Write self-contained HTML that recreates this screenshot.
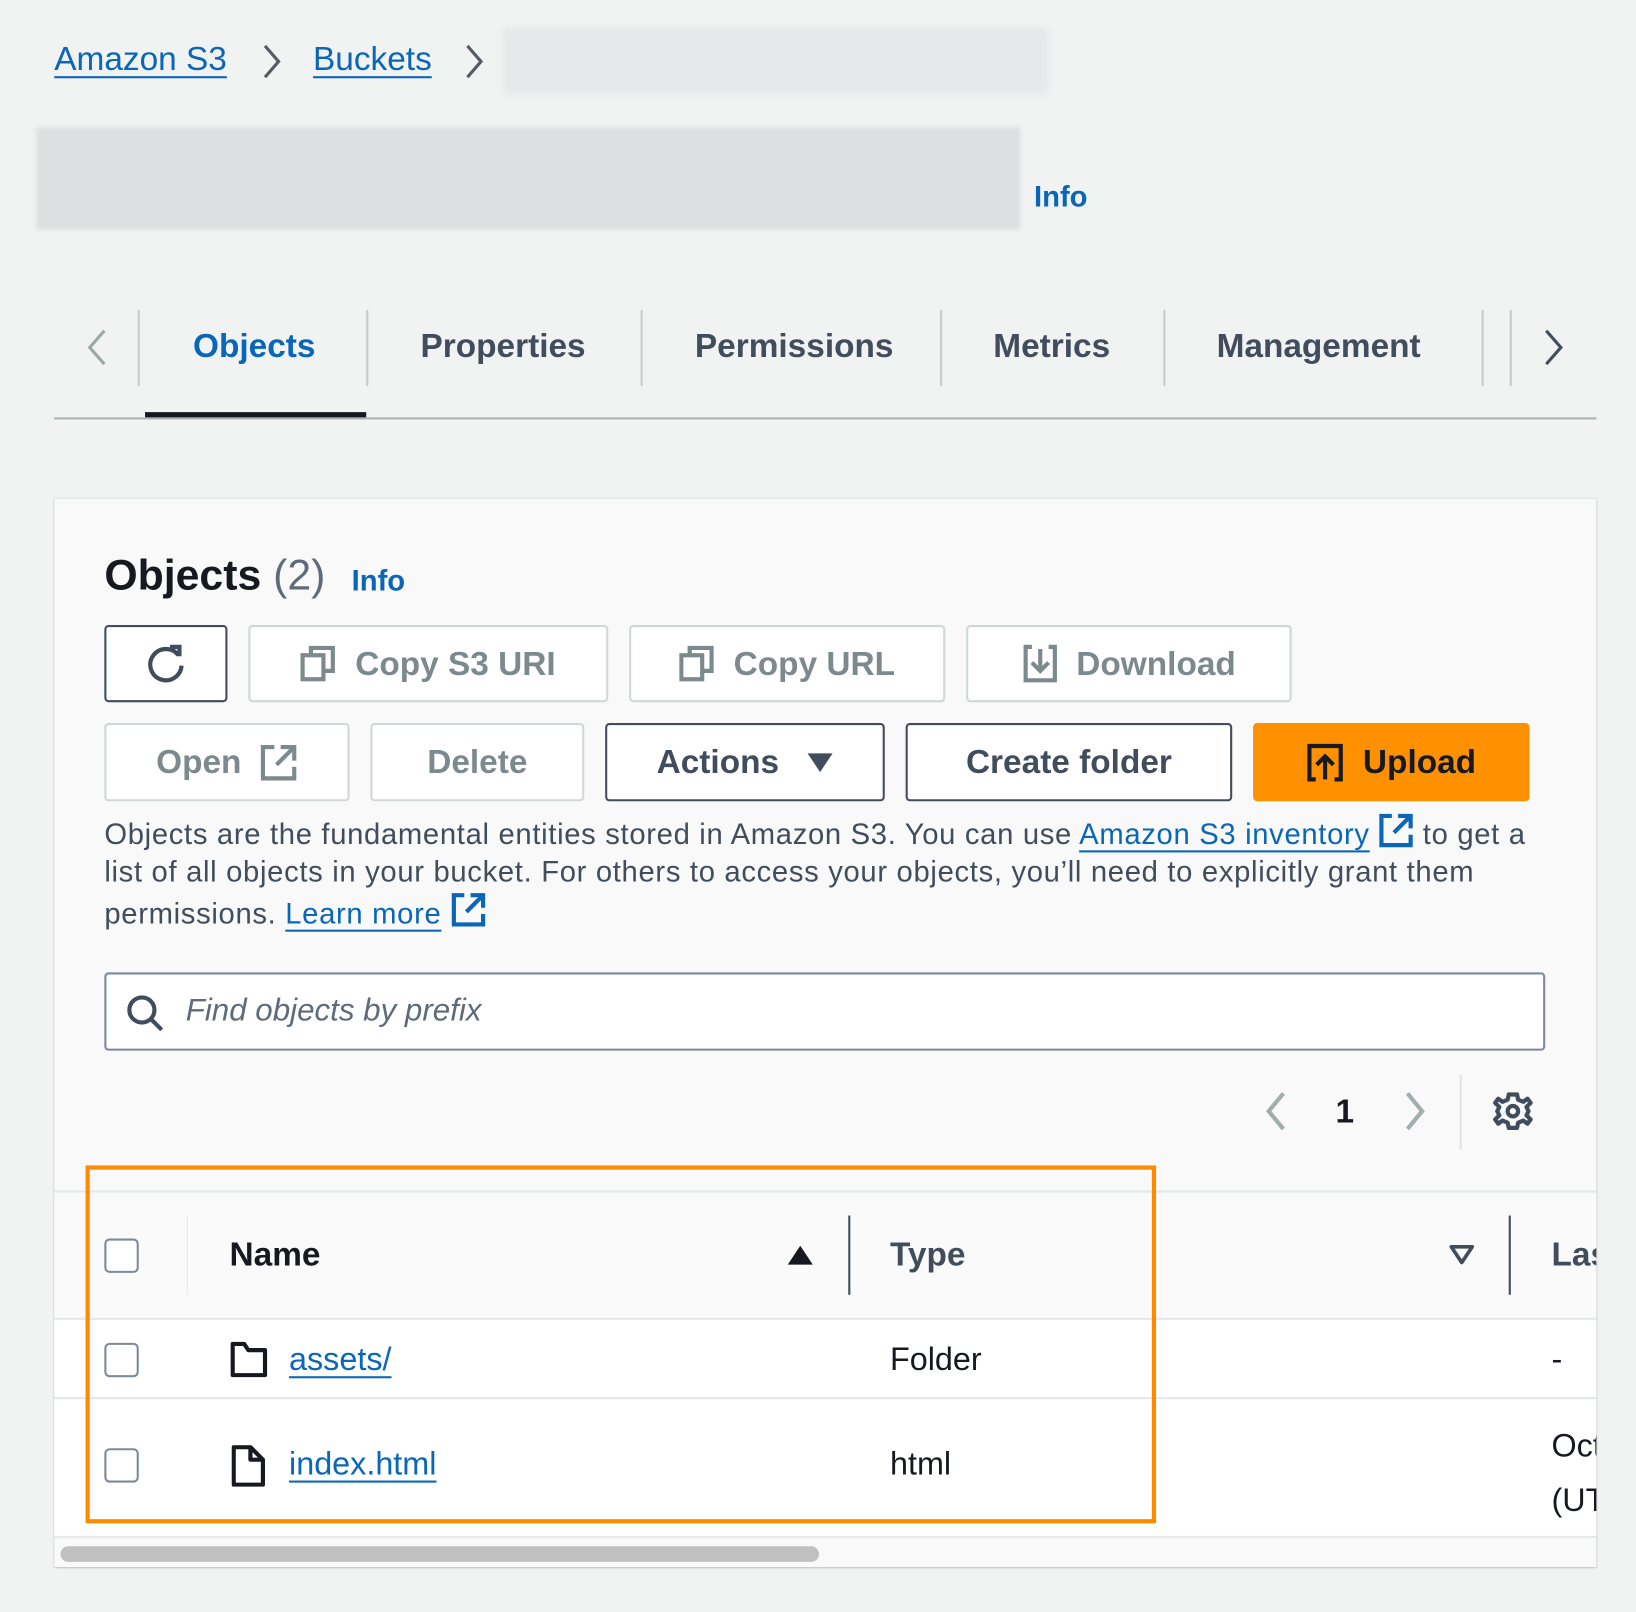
<!DOCTYPE html>
<html><head><meta charset="utf-8"><style>
*{margin:0;padding:0;box-sizing:border-box}
html,body{width:1636px;height:1612px;overflow:hidden;background:#f1f2f2;font-family:"Liberation Sans",sans-serif}
#w{position:absolute;left:0;top:0;width:1568px;height:1545px;transform:scale(1.04337);transform-origin:0 0}
.a{position:absolute;white-space:nowrap}
.lk{color:#0a66b8;text-decoration:underline;text-decoration-thickness:2px;text-underline-offset:6px}
.tab{font-size:32px;font-weight:bold;color:#414d5c;top:313px}
.sep{position:absolute;width:2px;background:#c6cccc;top:297px;height:73px}
.btn{position:absolute;border:2px solid #d1d6d6;background:#fff;border-radius:4px;font-size:32px;font-weight:bold;color:#7d8a8d;display:flex;align-items:center;justify-content:center;gap:18px}
.dk{border-color:#414d5c;color:#414d5c}
.p{font-size:28px;letter-spacing:0.65px;color:#414d5c;left:100px;line-height:38px}
.cb{position:absolute;left:100px;width:33px;height:33px;border:2px solid #7d8998;border-radius:5px;background:#fff}
.hl{position:absolute;left:52px;width:1478px;height:2px;background:#e4e8e8}
</style></head><body><div id="w">
<div class="a lk" style="left:52px;top:38px;font-size:32px">Amazon S3</div>
<svg class="a" style="left:250px;top:40px" width="22" height="38"><path d="M4 4 L17 19 L4 34" stroke="#545b64" stroke-width="3" fill="none"/></svg>
<div class="a lk" style="left:300px;top:38px;font-size:32px">Buckets</div>
<svg class="a" style="left:444px;top:40px" width="22" height="38"><path d="M4 4 L17 19 L4 34" stroke="#545b64" stroke-width="3" fill="none"/></svg>
<div class="a" style="left:483px;top:27px;width:522px;height:63px;background:#e6e8e9;filter:blur(3px)"></div>
<div class="a" style="left:35px;top:122px;width:943px;height:98px;background:#dedfe0;filter:blur(2px)"></div>
<div class="a" style="left:991px;top:173px;font-size:28px;font-weight:bold;color:#0a66b8">Info</div>
<svg class="a" style="left:80px;top:313px" width="26" height="40"><path d="M20 4 L6 20 L20 36" stroke="#9ba7a8" stroke-width="3" fill="none"/></svg>
<div class="sep" style="left:132px"></div><div class="sep" style="left:351px"></div><div class="sep" style="left:614px"></div><div class="sep" style="left:901px"></div><div class="sep" style="left:1115px"></div><div class="sep" style="left:1420px"></div><div class="sep" style="left:1447px"></div>
<div class="a tab" style="left:185px;color:#0a66b8">Objects</div>
<div class="a tab" style="left:403px">Properties</div>
<div class="a tab" style="left:666px">Permissions</div>
<div class="a tab" style="left:952px">Metrics</div>
<div class="a tab" style="left:1166px">Management</div>
<svg class="a" style="left:1476px;top:313px" width="26" height="40"><path d="M6 4 L20 20 L6 36" stroke="#414d5c" stroke-width="3" fill="none"/></svg>
<div class="a" style="left:52px;top:400px;width:1478px;height:2px;background:#a9b4b5"></div>
<div class="a" style="left:139px;top:395px;width:212px;height:5px;background:#16191f"></div>
<div class="a" style="left:52px;top:478px;width:1478px;height:1024px;background:#f9f9f9;box-shadow:0 1px 2px rgba(0,0,0,.25),0 0 0 1px #e3e6e6"></div>
<div class="a" style="left:100px;top:528px;font-size:41px;font-weight:bold;color:#16191f">Objects <span style="font-weight:normal;color:#5f6b7a">(2)</span></div>
<div class="a" style="left:337px;top:541px;font-size:28px;font-weight:bold;color:#0a66b8">Info</div>
<div class="btn dk" style="left:100px;top:599px;width:118px;height:74px"><svg width="42" height="42" viewBox="0 0 42 42"><path d="M33 13 A15 15 0 1 0 36 23" stroke="#414d5c" stroke-width="4" fill="none"/><path d="M25 5 L34 5 L34 14" stroke="#414d5c" stroke-width="4" fill="none"/></svg></div>
<div class="btn" style="left:238px;top:599px;width:345px;height:74px"><svg width="34" height="36"><rect x="2" y="10" width="20" height="23" stroke="#7d8a8d" stroke-width="4" fill="none"/><path d="M10 10 V3 H31 V25 H22" stroke="#7d8a8d" stroke-width="4" fill="none"/></svg>Copy S3 URI</div>
<div class="btn" style="left:603px;top:599px;width:303px;height:74px"><svg width="34" height="36"><rect x="2" y="10" width="20" height="23" stroke="#7d8a8d" stroke-width="4" fill="none"/><path d="M10 10 V3 H31 V25 H22" stroke="#7d8a8d" stroke-width="4" fill="none"/></svg>Copy URL</div>
<div class="btn" style="left:926px;top:599px;width:312px;height:74px"><svg width="34" height="38"><path d="M9 3 H3 V35 H31 V3 H25 M17 5 V26 M9 18 L17 26 L25 18" stroke="#7d8a8d" stroke-width="4" fill="none"/></svg>Download</div>
<div class="btn" style="left:100px;top:693px;width:235px;height:75px">Open <svg width="36" height="36"><path d="M14 3 H3 V33 H33 V22 M20 3 H33 V16 M33 3 L16 20" stroke="#7d8a8d" stroke-width="4" fill="none"/></svg></div>
<div class="btn" style="left:355px;top:693px;width:205px;height:75px">Delete</div>
<div class="btn dk" style="left:580px;top:693px;width:268px;height:75px;gap:26px">Actions <svg width="26" height="20"><path d="M1 1 H25 L13 19 Z" fill="#414d5c"/></svg></div>
<div class="btn dk" style="left:868px;top:693px;width:313px;height:75px">Create folder</div>
<div class="btn" style="left:1201px;top:693px;width:265px;height:75px;background:#ff9100;border-color:#ff9100;color:#16191f"><svg width="36" height="38"><path d="M9 35 H3 V3 H33 V35 H27 M18 35 V13 M10 21 L18 13 L26 21" stroke="#16191f" stroke-width="4" fill="none"/></svg>Upload</div>
<div class="a p" style="top:779px">Objects are the fundamental entities stored in Amazon S3. You can use <span class="lk">Amazon S3 inventory</span> <svg width="34" height="34" style="vertical-align:-4px"><path d="M13 3 H3 V31 H31 V21 M19 3 H31 V15 M31 3 L15 19" stroke="#0a66b8" stroke-width="4" fill="none"/></svg> to get a</div>
<div class="a p" style="top:817px">list of all objects in your bucket. For others to access your objects, you’ll need to explicitly grant them</div>
<div class="a p" style="top:855px">permissions. <span class="lk">Learn more</span> <svg width="34" height="34" style="vertical-align:-4px"><path d="M13 3 H3 V31 H31 V21 M19 3 H31 V15 M31 3 L15 19" stroke="#0a66b8" stroke-width="4" fill="none"/></svg></div>
<div class="a" style="left:100px;top:932px;width:1381px;height:75px;border:2px solid #7d8998;border-radius:4px;background:#fff"></div>
<svg class="a" style="left:119px;top:951px" width="40" height="40"><circle cx="17" cy="17" r="12" stroke="#414d5c" stroke-width="4" fill="none"/><path d="M26 26 L36 36" stroke="#414d5c" stroke-width="4"/></svg>
<div class="a" style="left:178px;top:952px;font-size:30px;font-style:italic;color:#5f6b7a">Find objects by prefix</div>
<svg class="a" style="left:1208px;top:1044px" width="30" height="42"><path d="M22 4 L8 21 L22 38" stroke="#a1aeae" stroke-width="4" fill="none"/></svg>
<div class="a" style="left:1280px;top:1047px;font-size:32px;font-weight:bold;color:#16191f">1</div>
<svg class="a" style="left:1341px;top:1044px" width="30" height="42"><path d="M8 4 L22 21 L8 38" stroke="#a1aeae" stroke-width="4" fill="none"/></svg>
<div class="a" style="left:1399px;top:1030px;width:2px;height:72px;background:#e2e6e6"></div>
<svg class="a" style="left:1430px;top:1045px" width="40" height="40" viewBox="0 0 40 40"><path d="M20 4 L24 4 L25 9 L30 11 L34 8 L37 12 L33 16 L35 20 L33 24 L37 28 L34 32 L30 29 L25 31 L24 36 L16 36 L15 31 L10 29 L6 32 L3 28 L7 24 L5 20 L7 16 L3 12 L6 8 L10 11 L15 9 L16 4 Z" stroke="#414d5c" stroke-width="4" fill="none" stroke-linejoin="round"/><circle cx="20" cy="20" r="5" stroke="#414d5c" stroke-width="4" fill="none"/></svg>
<div class="a" style="left:52px;top:1142px;width:1478px;height:122px;background:#fafafa"></div>
<div class="a" style="left:52px;top:1264px;width:1478px;height:209px;background:#fff"></div>
<div class="hl" style="top:1141px"></div><div class="hl" style="top:1263px"></div><div class="hl" style="top:1339px"></div><div class="hl" style="top:1472px"></div>
<div class="cb" style="top:1187px"></div>
<div class="a" style="left:179px;top:1165px;width:1px;height:76px;background:#e2e6e6"></div>
<div class="a" style="left:220px;top:1184px;font-size:32px;font-weight:bold;color:#16191f">Name</div>
<svg class="a" style="left:754px;top:1192px" width="26" height="22"><path d="M13 2 L25 20 H1 Z" fill="#16191f"/></svg>
<div class="a" style="left:813px;top:1165px;width:2px;height:76px;background:#414d5c"></div>
<div class="a" style="left:853px;top:1184px;font-size:32px;font-weight:bold;color:#414d5c">Type</div>
<svg class="a" style="left:1388px;top:1192px" width="26" height="22"><path d="M3 3 H23 L13 18 Z" stroke="#414d5c" stroke-width="3.5" fill="none" stroke-linejoin="round"/></svg>
<div class="a" style="left:1446px;top:1165px;width:2px;height:76px;background:#414d5c"></div>
<div class="a" style="left:1487px;top:1184px;width:43px;overflow:hidden;font-size:32px;font-weight:bold;color:#414d5c">Last</div>
<div class="cb" style="top:1287px"></div>
<svg class="a" style="left:221px;top:1286px" width="36" height="34"><path d="M2 2 H13 L17 8 H33 V32 H2 Z" stroke="#16191f" stroke-width="4" fill="none" stroke-linejoin="round"/></svg>
<div class="a lk" style="left:277px;top:1285px;font-size:31px">assets/</div>
<div class="a" style="left:853px;top:1285px;font-size:31px;color:#16191f">Folder</div>
<div class="a" style="left:1487px;top:1285px;font-size:31px;color:#16191f">-</div>
<div class="cb" style="top:1388px"></div>
<svg class="a" style="left:222px;top:1385px" width="32" height="40"><path d="M2 2 H18 L30 14 V38 H2 Z M18 2 V14 H30" stroke="#16191f" stroke-width="4" fill="none" stroke-linejoin="round"/></svg>
<div class="a lk" style="left:277px;top:1385px;font-size:31px">index.html</div>
<div class="a" style="left:853px;top:1385px;font-size:31px;color:#16191f">html</div>
<div class="a" style="left:1487px;top:1360px;width:43px;overflow:hidden;font-size:31px;color:#16191f;line-height:52px">Oct<br>(UTC</div>
<div class="a" style="left:58px;top:1482px;width:727px;height:15px;border-radius:8px;background:#c0c0c0"></div>
<div class="a" style="left:82px;top:1117px;width:1026px;height:343px;border:4px solid #ff8a00"></div>
</div></body></html>
